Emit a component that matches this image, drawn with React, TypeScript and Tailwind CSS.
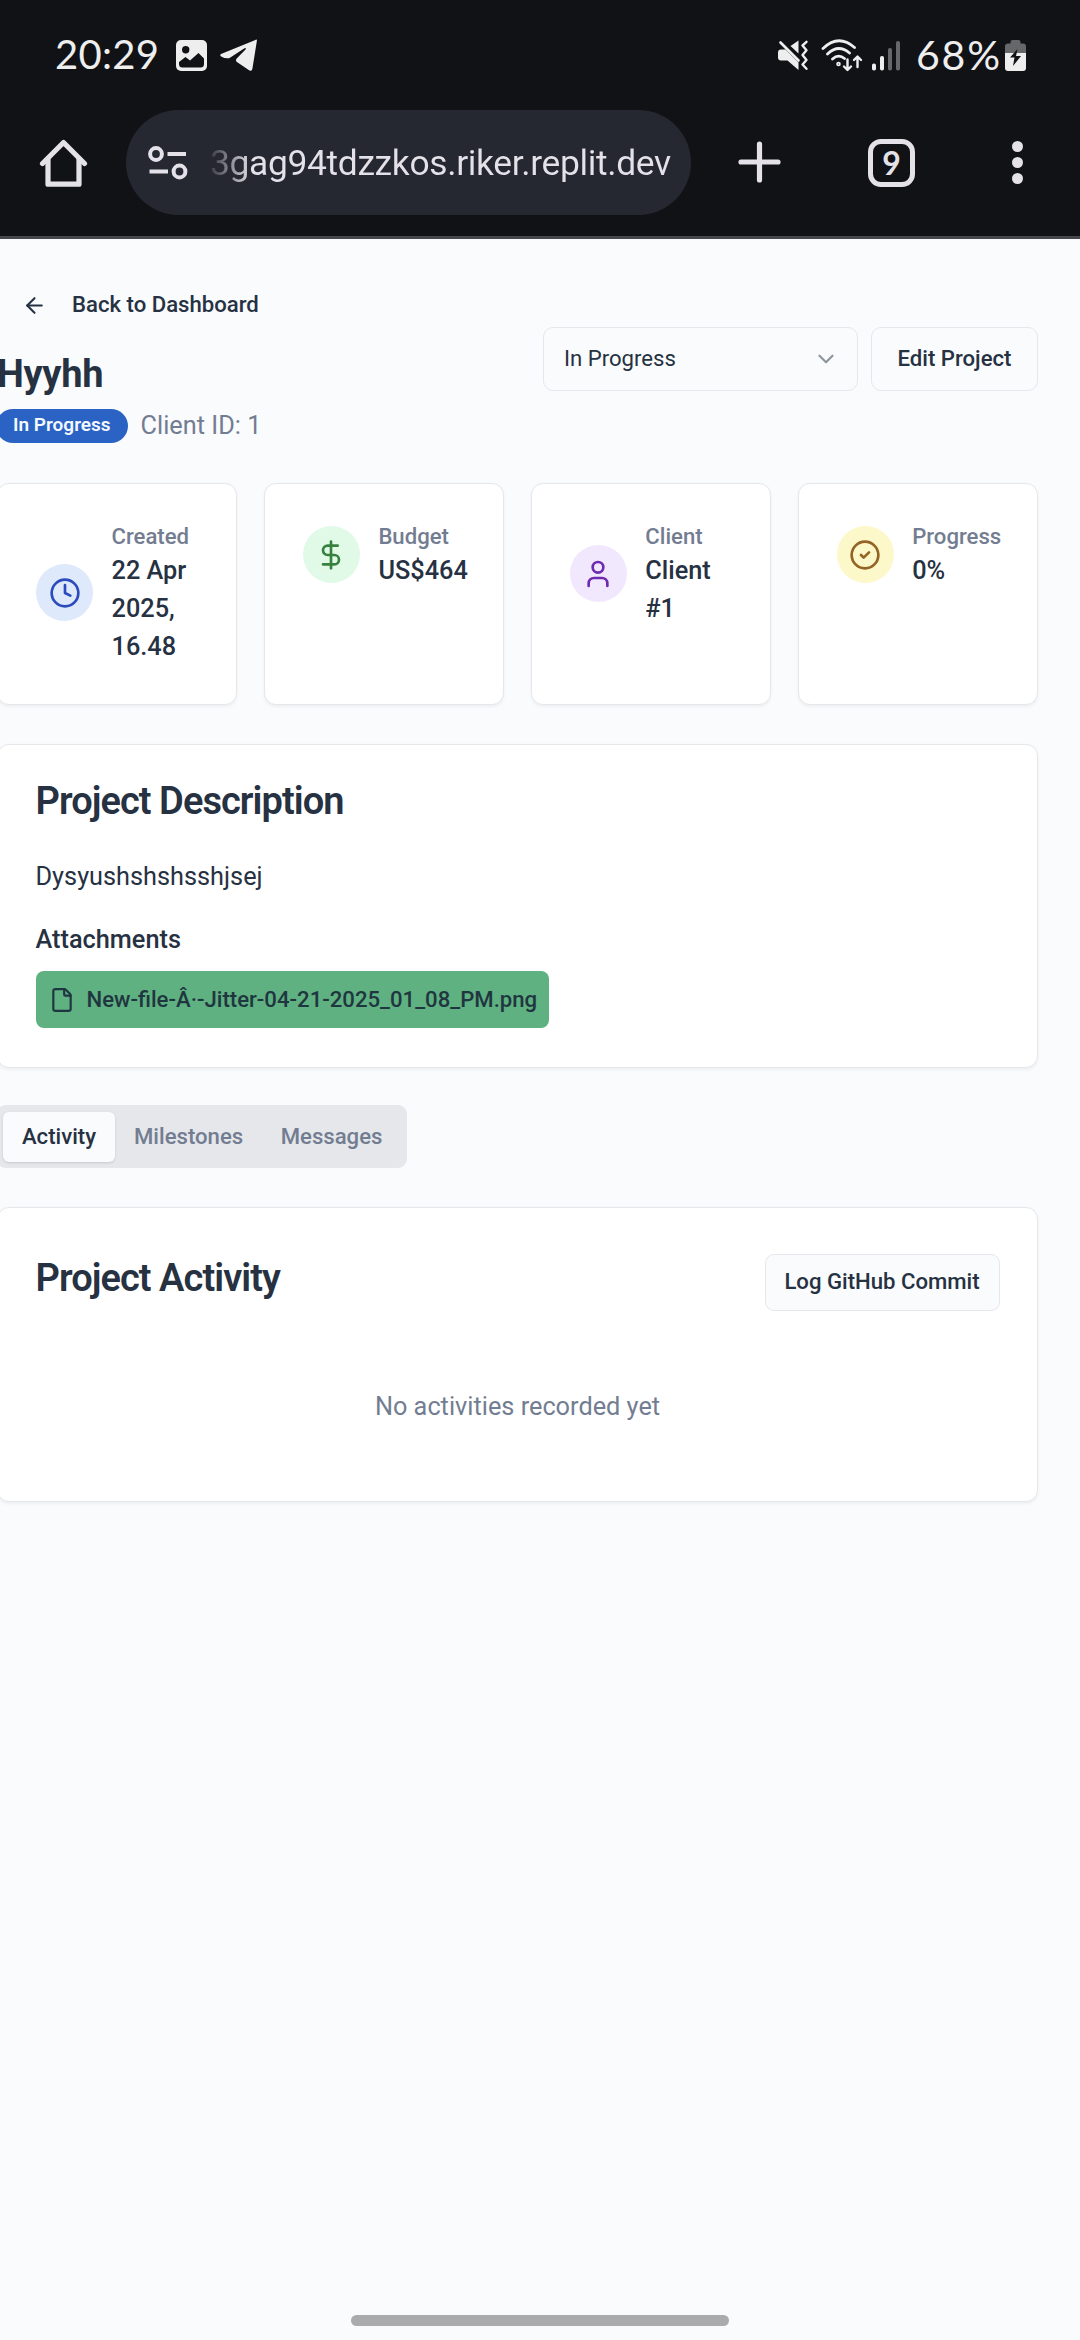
import type { ReactNode } from "react";
import { ArrowLeft, ChevronDown, Clock, DollarSign, User, CircleCheck, File } from "lucide-react";

function StatusBar() {
  return (
    <div className="flex h-[110px] items-center justify-between pl-[55px] pr-[54px] font-[Lato,sans-serif]">
      <div className="flex items-center">
        <span className="-mt-px w-[121px] text-[40px] leading-[47px] tracking-[0.3px]">20:29</span>
        <svg className="h-[31px] w-[31px]" viewBox="0 0 31 31">
          <rect width="31" height="31" rx="5" fill="#eeeeee" />
          <circle cx="9.7" cy="9.7" r="3.7" fill="#111216" />
          <path d="M3 22 L9.5 17 L14 20.5 L22.5 13 L28 18.5 V24 Q28 27.5 24.5 27.5 H6.5 Q3 27.5 3 24 Z" fill="#111216" />
        </svg>
        <svg className="ml-[13px] h-[32px] w-[37px]" viewBox="0 0 37 32">
          <path d="M36.5 0.6 L1 15 Q-0.5 16.3 1.2 17.4 Q5 19.8 9.2 19.2 L24.5 9.3 Q26.6 8.6 25.5 10.4 L16.5 19.8 Q15.3 21.6 16.9 23 L29.5 31.4 Q32 32.3 32.4 29.8 L36.9 1.8 Q37 0.6 36.5 0.6 Z" fill="#eeeeee" />
        </svg>
      </div>
      <div className="flex items-center">
        <svg className="h-[31px] w-[31px]" viewBox="0 0 31 31" fill="none">
          <path d="M12.5 6 L20.5 0.5 V13.5 Z" fill="#eeeeee" />
          <path d="M3 9.5 H7.5 L20.5 22.5 V30 L9.5 20.5 H3 Q0 20.5 0 17.5 V12.5 Q0 9.5 3 9.5 Z" fill="#eeeeee" />
          <path d="M2.5 2.5 L20.5 20.5" stroke="#eeeeee" strokeWidth="2.6" strokeLinecap="round" />
          <path d="M28.5 1.8 L24.5 5.5 L28.5 10.2 L24.5 15 L28.5 20 L24.5 24.5 L28.5 28.8" stroke="#eeeeee" strokeWidth="2.4" strokeLinecap="round" strokeLinejoin="round" />
        </svg>
        <svg className="ml-[12px] h-[33px] w-[42px]" viewBox="0 0 42 33" fill="none" stroke="#eeeeee" strokeWidth="2.8" strokeLinecap="round" strokeLinejoin="round">
          <path d="M2 9.5 Q17.5 -5.5 33.5 8.5 M6.5 15 Q17.5 4.5 28.5 14 M11.5 20 Q17.5 14.5 23.5 19.5" />
          <circle cx="17.5" cy="25" r="0.9" />
          <path d="M26.5 20.5 V30 M23 27.5 L26.5 31 L30 27.5 M36.5 28 V18 M33 21 L36.5 17.5 L40 21" strokeWidth="2.4" />
        </svg>
        <svg className="ml-[9px] h-[31px] w-[28px]" viewBox="0 0 28 31">
          <rect x="0" y="23.5" width="4" height="7" rx="1.8" fill="#eeeeee" />
          <rect x="8" y="16" width="4" height="14.5" rx="1.8" fill="#eeeeee" />
          <rect x="16" y="8" width="4" height="22.5" rx="1.8" fill="#666769" />
          <rect x="24" y="1" width="4" height="29.5" rx="1.8" fill="#666769" />
        </svg>
        <span className="-mt-px ml-[16px] w-[89px] text-[41px] leading-[47px] tracking-[1.8px] whitespace-nowrap">68%</span>
        <svg className="h-[31px] w-[21px]" viewBox="0 0 21 31">
          <path d="M5.5 3.5 V2 Q5.5 0 7.5 0 H13.5 Q15.5 0 15.5 2 V3.5 H18 Q21 3.5 21 6.5 V14 H0 V6.5 Q0 3.5 3 3.5 Z" fill="#666769" />
          <path d="M0 13 H21 V28 Q21 31 18 31 H3 Q0 31 0 28 Z" fill="#eeeeee" />
          <path d="M12.5 9 L5 17.5 H9.5 L8 26 L16 16 H11 Z" fill="#111216" />
        </svg>
      </div>
    </div>
  );
}

function Toolbar() {
  return (
    <div className="flex h-[126px] items-start">
      <svg className="ml-[39px] mt-[29px] h-[48px] w-[49px] shrink-0" viewBox="0 0 49 48" fill="none" stroke="#e4e2e8" strokeWidth="5.2" strokeLinecap="round" strokeLinejoin="round">
        <path d="M3.5 24.5 L24.5 3.5 L45.5 24.5" />
        <path d="M9 20 V45.2 H40 V20" />
      </svg>
      <div className="ml-[38px] flex h-[105px] w-[565px] shrink-0 items-center rounded-full bg-[#262831]">
        <svg className="ml-[22px] h-[34px] w-[40px]" viewBox="0 0 40 34" fill="none" stroke="#e4e2e8" strokeWidth="4">
          <circle cx="8" cy="8" r="5.9" />
          <circle cx="31.5" cy="25.5" r="5.9" />
          <path d="M19.5 8 H38 M1.5 25.5 H20" />
        </svg>
        <span className="ml-[22px] bg-linear-to-r from-[#e4e2e8]/10 via-[#e4e2e8] via-[9%] to-[#e4e2e8] bg-clip-text text-[35.4px] leading-[44px] tracking-[-0.35px] whitespace-nowrap text-transparent">
          3gag94tdzzkos.riker.replit.dev
        </span>
      </div>
      <svg className="ml-[47px] mt-[31px] h-[42px] w-[43px] shrink-0" viewBox="0 0 43 42" stroke="#e4e2e8" strokeWidth="5.2" strokeLinecap="round">
        <path d="M21.5 3 V39 M3 21 H40" />
      </svg>
      <div className="ml-[87px] mt-[29px] flex h-[48px] w-[47px] shrink-0 items-center justify-center rounded-[13px] border-[5px] border-[#e4e2e8] font-[Lato,sans-serif] text-[32px] leading-none font-bold text-[#e4e2e8]">
        9
      </div>
      <div className="ml-[97px] mt-[31px] flex flex-col gap-[5px]">
        <i className="size-[11px] rounded-full bg-[#e4e2e8]" />
        <i className="size-[11px] rounded-full bg-[#e4e2e8]" />
        <i className="size-[11px] rounded-full bg-[#e4e2e8]" />
      </div>
    </div>
  );
}

const card = "rounded-[12px] border-[1.6px] border-[#e5e7eb] bg-white shadow-[0_1.6px_3.2px_rgba(0,0,0,0.05)]";

function StatCard({ label, lines, tint, icon }: { label: string; lines: string[]; tint: string; icon: ReactNode }) {
  return (
    <div className={card + " h-[222px] px-[38px] pt-[36px]"}>
      <div className="flex items-center">
        <div className={"flex size-[57px] shrink-0 items-center justify-center rounded-full " + tint}>{icon}</div>
        <div className="ml-[18.5px] font-medium whitespace-nowrap">
          <p className="text-[22.15px] leading-[32px] text-[#737d91]">{label}</p>
          {lines.map((line) => (
            <p key={line} className="text-[25.3px] leading-[38px]">{line}</p>
          ))}
        </div>
      </div>
    </div>
  );
}

export default function App() {
  return (
    <div className="relative h-[2340px] w-[1080px] overflow-hidden bg-[#f9fbfd] font-[Roboto,sans-serif] text-[#263142]">
      <header className="h-[239px] border-b-[3px] border-[#47474b] bg-[#111216] text-[#eeeeee]">
        <StatusBar />
        <Toolbar />
      </header>

      <main className="-ml-[3px] w-[1041px]">
        <div className="flex h-[243.5px] items-start justify-between">
          <div>
            <div className="ml-[25px] mt-[50px] flex h-[32px] items-center">
              <ArrowLeft className="mt-[1px] size-[25px]" strokeWidth={2} />
              <span className="ml-[25px] text-[22.15px] font-medium">Back to Dashboard</span>
            </div>
            <h1 className="mt-[29px] text-[38px] leading-[48px] font-bold tracking-[-0.3px]">Hyyhh</h1>
            <div className="-ml-px mt-[10.5px] flex items-center">
              <span className="flex h-[34px] items-center rounded-full bg-[#2a63c4] px-[17px] text-[19px] font-semibold text-[#f4f9ff]">In Progress</span>
              <span className="ml-[13px] text-[25.3px] leading-[34px] text-[#737d91]">Client ID: 1</span>
            </div>
          </div>
          <div className="mt-[88px] flex gap-[13px]">
            <button className="flex h-[64px] w-[315px] items-center justify-between rounded-[10px] border-[1.6px] border-[#e5e7eb] pl-[20px] pr-[18px] text-[22.15px]">
              In Progress
              <ChevronDown className="size-[26px] opacity-50" />
            </button>
            <button className="flex h-[64px] w-[167px] items-center justify-center rounded-[10px] border-[1.6px] border-[#e5e7eb] text-[22.15px] font-medium">Edit Project</button>
          </div>
        </div>

        <section className="grid grid-cols-4 gap-[26.6px]">
          <StatCard label="Created" lines={["22 Apr", "2025,", "16.48"]} tint="bg-[#dee9fb]" icon={<Clock className="size-[32px] text-[#2c4bbd]" />} />
          <StatCard label="Budget" lines={["US$464"]} tint="bg-[#e1fae8]" icon={<DollarSign className="size-[32px] text-[#37803f]" />} />
          <StatCard label="Client" lines={["Client", "#1"]} tint="bg-[#f1e8fd]" icon={<User className="size-[32px] text-[#6f2ab0]" />} />
          <StatCard label="Progress" lines={["0%"]} tint="bg-[#fdf8c9]" icon={<CircleCheck className="size-[32px] text-[#936423]" />} />
        </section>

        <section className={card + " mt-[39px] h-[324px] px-[37.5px] pt-[32px]"}>
          <h2 className="text-[38px] leading-[48px] font-semibold tracking-[-0.025em]">Project Description</h2>
          <p className="mt-[33px] text-[25.3px] leading-[38px]">Dysyushshshsshjsej</p>
          <h3 className="mt-[25px] text-[25.3px] leading-[38px] font-medium">Attachments</h3>
          <div className="mt-[12.5px] flex h-[57px] w-[513px] items-center rounded-[8px] bg-[#5fb181] pl-[13px] text-[#1f3640]">
            <File className="size-[26px]" />
            <span className="ml-[12px] text-[22.15px] font-medium whitespace-nowrap">New-file-Â·-Jitter-04-21-2025_01_08_PM.png</span>
          </div>
        </section>

        <nav className="mt-[37.5px] flex h-[63px] w-[410px] items-center rounded-[9px] bg-[#e5e7eb] pl-[6px] text-[22.15px] font-medium text-[#737d91]">
          <span className="flex h-[50px] w-[112px] items-center justify-center rounded-[6px] bg-[#f9fbfd] text-[#263142] shadow-sm">Activity</span>
          <span className="ml-[19px]">Milestones</span>
          <span className="ml-[37.5px]">Messages</span>
        </nav>

        <section className={card + " mt-[38.5px] h-[295px] px-[37.5px] pt-[46px]"}>
          <div className="flex justify-between">
            <h2 className="text-[38px] leading-[48px] font-semibold tracking-[-0.025em]">Project Activity</h2>
            <button className="flex h-[57px] w-[235px] items-center justify-center rounded-[9px] border-[1.6px] border-[#e5e7eb] bg-[#f9fbfd] text-[22.15px] font-medium">Log GitHub Commit</button>
          </div>
          <p className="mt-[77px] text-center text-[25.3px] leading-[38px] text-[#737d91]">No activities recorded yet</p>
        </section>
      </main>

      <div className="absolute bottom-[14px] left-[351px] h-[11px] w-[378px] rounded-full bg-[#aaabac]" />
    </div>
  );
}
